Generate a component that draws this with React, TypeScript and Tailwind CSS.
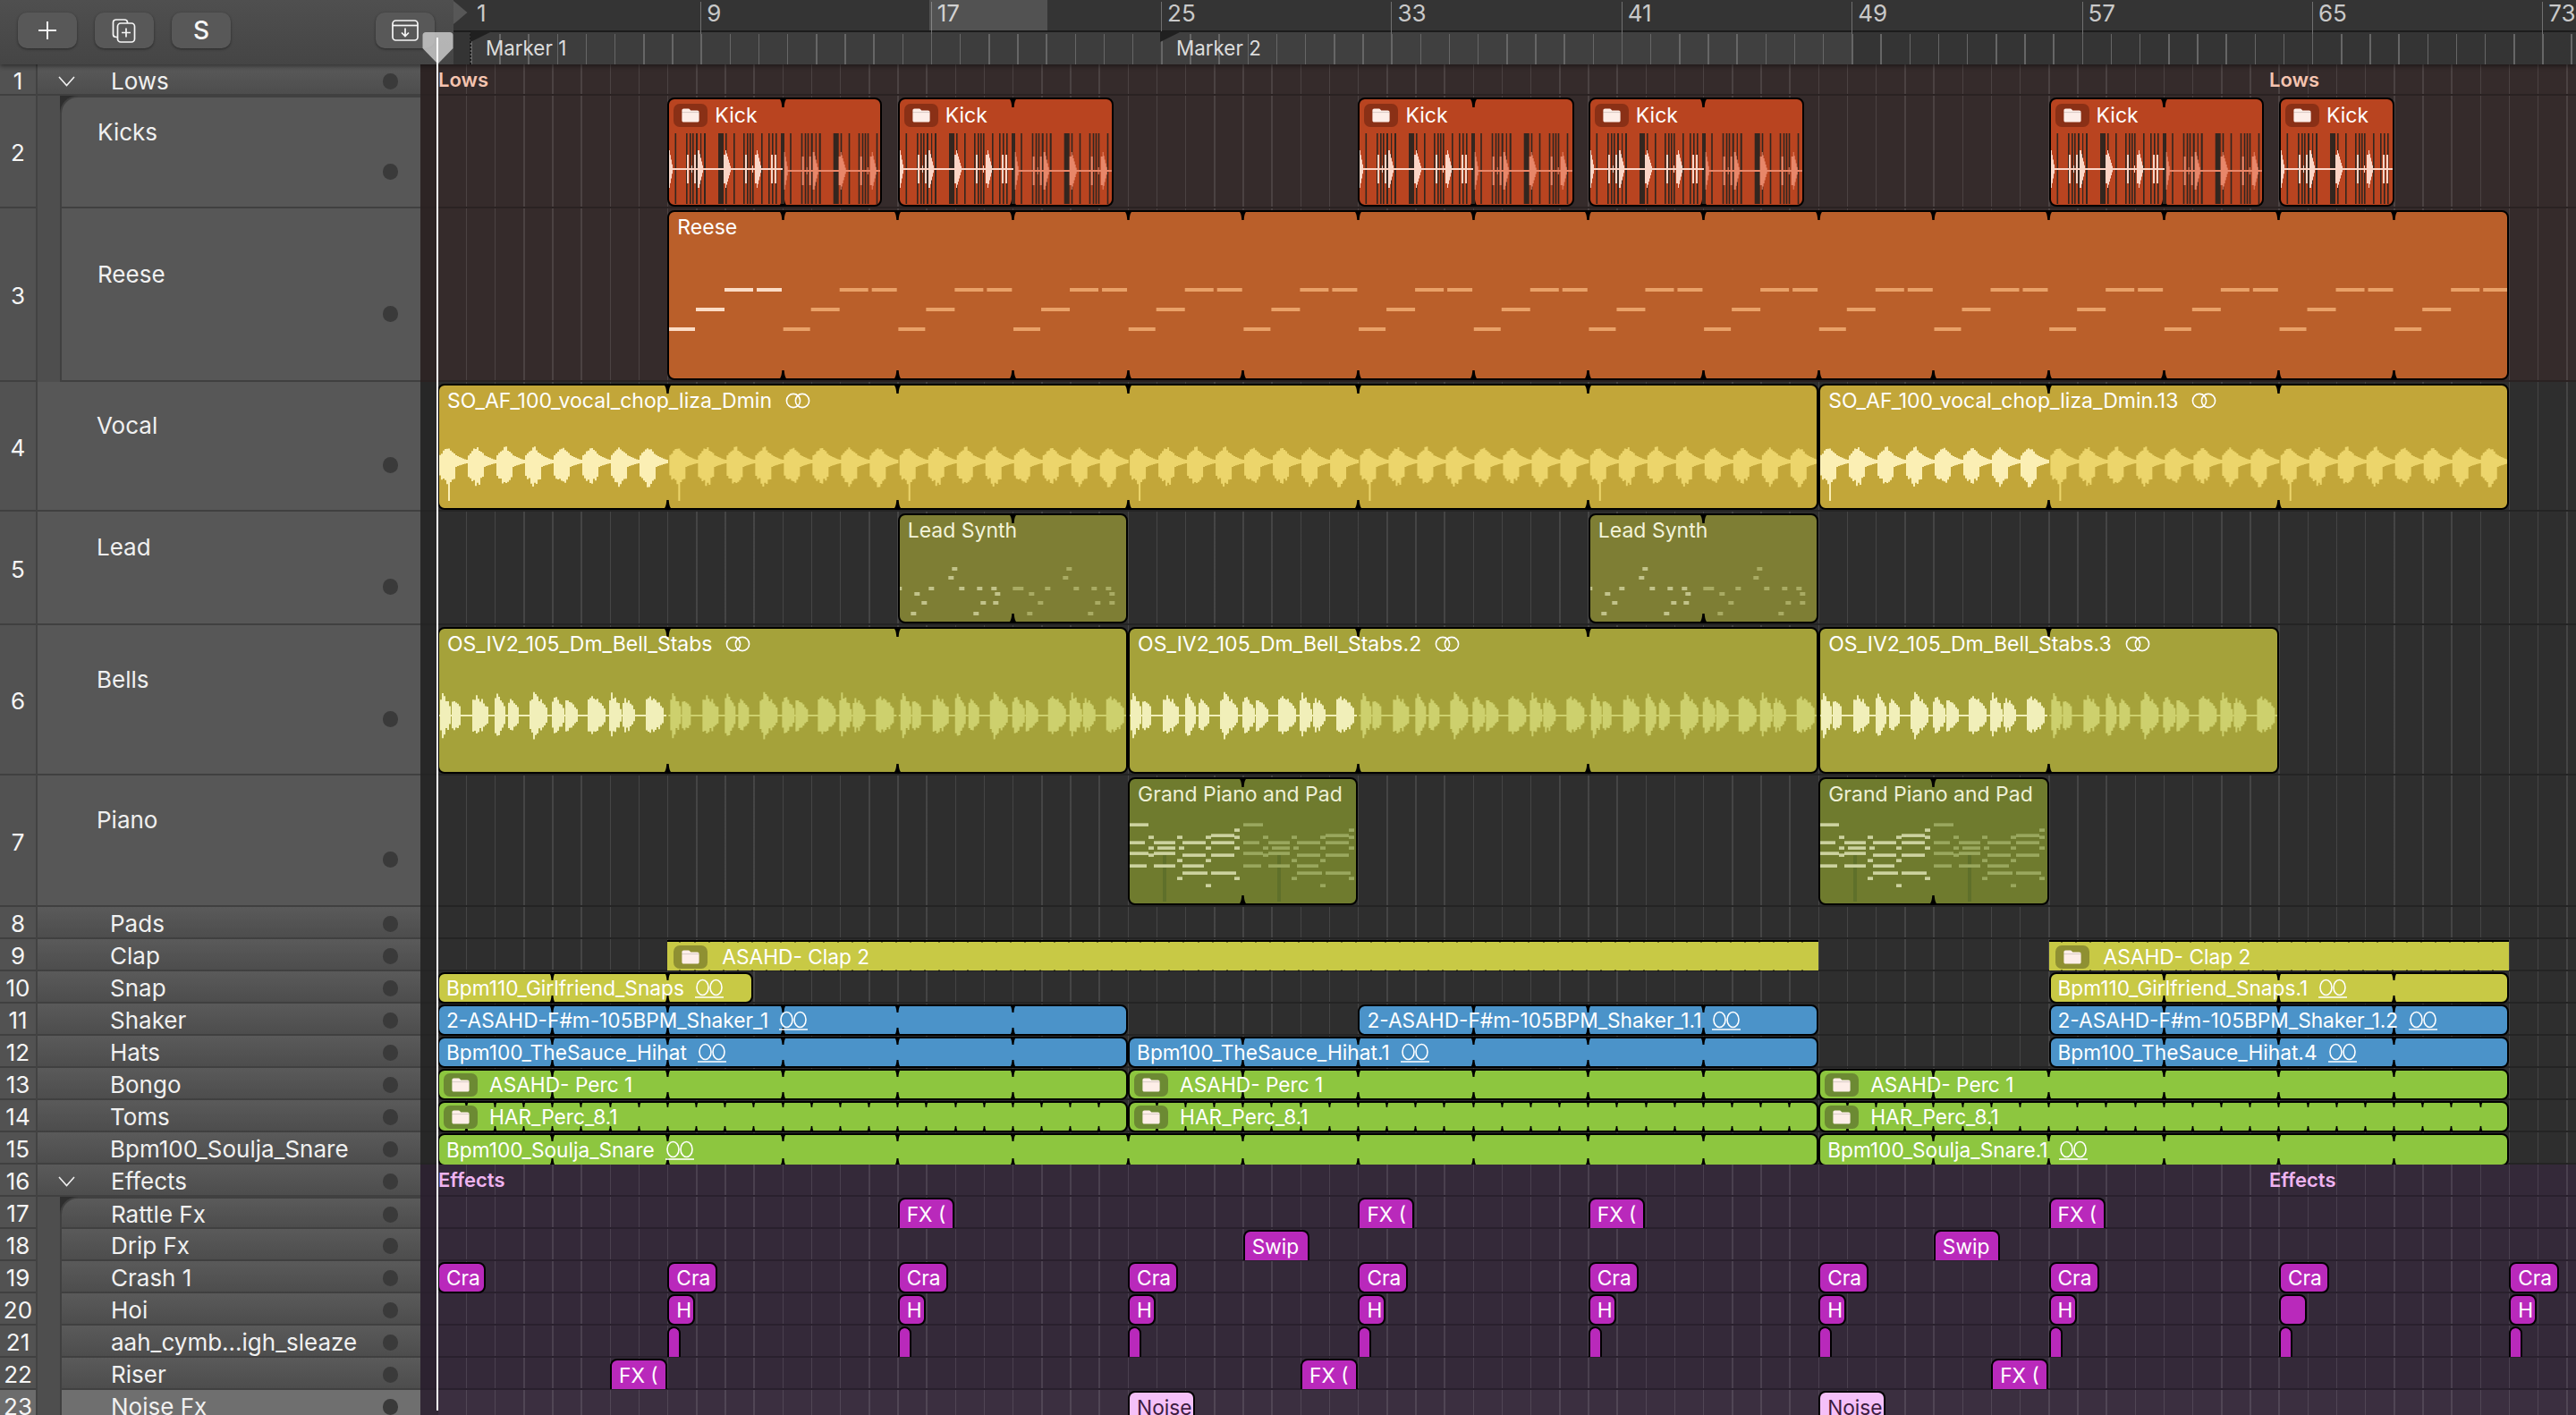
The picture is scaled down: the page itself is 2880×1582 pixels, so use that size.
import React from "react";

const U = 32.17;
const X = (k: number) => 490 + k * U;
const rnd = (i: number) => {
  const s = Math.sin(i * 12.9898 + 4.1) * 43758.5453;
  return s - Math.floor(s);
};

type Art = (w: number) => React.ReactNode;

/* ---------- drawings ---------- */
const bar = (x: number, up: number, dn: number, cy: number, w = 2) =>
  `M${x} ${(cy - up).toFixed(1)}h${w}v${(up + dn).toFixed(1)}h-${w}z`;

const kickBars: [number, number][] = [
  [6.5, 1.6], [19, 1.6], [23, 1.6], [26, 1.6], [30, 2], [35, 1.2], [39, 2], [55, 6], [63, 1.6], [72, 1.6], [83, 1.6],
  [87, 1.6], [90, 1.6], [93, 1.6], [103, 1.6], [111, 1.6], [115, 1.6], [119, 1.6], [125, 4],
];
const kickSpikes: [number, number, number][] = [
  [0, 4, 21], [20, 2, 16], [25, 1, 4], [28, 2, 16], [32, 2, 21], [33, 5, 21], [61, 2, 16], [63, 6, 21], [85, 2, 16],
  [93, 1, 4], [96, 2, 16], [98, 5, 21], [114, 2, 16], [118, 2, 16],
];
const kickArt: Art = (w) => {
  const loops = Math.ceil(w / 128.7);
  return Array.from({ length: loops }).map((_, l) => {
    const ox = l * 128.7 + 2;
    const cy = l === 0 ? 80 : 82;
    let d = `M${ox} ${cy - 1}h127v2h-127z`;
    kickSpikes.forEach(([x, sw, h]) => {
      for (let i = 0; i < sw; i++) {
        const hh = sw <= 2 ? h : h * (1 - i / sw);
        d += bar(ox + x + i, hh, hh, cy, 1);
      }
    });
    return (
      <g key={l}>
        {kickBars.map(([x, bw], i) => (
          <rect key={i} x={ox + x} y={40} width={bw} height={79} fill="#33261f" />
        ))}
        <path d={d} fill={l === 0 ? "#fbd5c6" : "#e8876a"} />
      </g>
    );
  });
};

const reeseArt: Art = (w) => {
  const loops = Math.ceil(w / 128.68);
  return Array.from({ length: loops }).map((_, l) => {
    const ox = l * 128.68 + 1;
    const fill = l === 0 ? "#fbdcc6" : "#e9a168";
    return (
      <g key={l} fill={fill}>
        <rect x={ox} y={131} width={30} height={4} />
        <rect x={ox + 31} y={109} width={32} height={4} />
        <rect x={ox + 63} y={87} width={32} height={4} />
        <rect x={ox + 99} y={87} width={28} height={4} />
      </g>
    );
  });
};

const vocalPath = (ox: number, cy: number) => {
  let d = "";
  for (let x = 0; x < 256; x += 2) {
    const t = x % 32;
    let up = 2;
    let dn = 2;
    if (t < 20) {
      const pk = 1 - Math.abs(t - 9) / 11;
      up = 5 + 12 * pk * (0.75 + 0.35 * rnd(x + 3));
      dn = t < 17 ? 14 + 13 * pk * (0.55 + 0.8 * rnd(x + 50)) : 6;
    } else if (t < 29) {
      const e = 1 - (t - 20) / 9;
      up = 2 + 4 * e;
      dn = 2 + 3 * e;
    }
    d += bar(ox + x, up, dn, cy);
  }
  d += bar(ox + 10, 2, 44, cy);
  return d;
};
const vocalArt: Art = (w) => {
  const loops = Math.ceil(w / 257.4);
  return Array.from({ length: loops }).map((_, l) => (
    <path key={l} d={vocalPath(l * 257.36 + 2, 87)} fill={l === 0 ? "#fbefb4" : "#ecd56b"} />
  ));
};

const bellBumps: [number, number, number][] = [
  [2, 12, 26], [15, 10, 21], [38, 18, 25], [63, 12, 24], [78, 12, 21], [102, 20, 27], [127, 13, 25], [142, 13, 21],
  [167, 20, 25], [191, 13, 26], [206, 13, 21], [232, 20, 24],
];
const bellsPath = (ox: number, cy: number) => {
  let d = `M${ox} ${cy - 1}h255v2h-255z`;
  bellBumps.forEach(([x, bw, h], bi) => {
    for (let i = 0; i < bw; i += 2) {
      const t = i / bw;
      const e = t < 0.15 ? 0.8 : Math.pow(1 - (t - 0.15) / 0.85, 0.45);
      const v = h * e * (0.75 + 0.28 * rnd(bi * 31 + i));
      d += bar(ox + x + i, v, v * (0.85 + 0.2 * rnd(i + bi)), cy);
    }
  });
  return d;
};
const bellsArt: Art = (w) => {
  const loops = Math.ceil(w / 257.4);
  return Array.from({ length: loops }).map((_, l) => (
    <path key={l} d={bellsPath(l * 257.36 + 1, 99)} fill={l === 0 ? "#f1efb9" : "#cdd06d"} />
  ));
};

const leadA: [number, number, number][] = [
  [12, 264, 12], [66, 282, 18], [90, 312, 18], [54, 348, 18], [114, 264, 18], [180, 228, 18], [192, 198, 18],
  [216, 264, 18], [276, 264, 18], [288, 312, 18], [264, 348, 18], [324, 264, 18], [336, 282, 18], [330, 312, 18],
];
const leadB: [number, number, number][] = [
  [396, 264, 36], [450, 282, 18], [480, 312, 18], [444, 348, 18], [504, 264, 18], [564, 228, 18], [576, 198, 18],
  [600, 264, 18], [660, 264, 18], [672, 312, 18], [648, 348, 18], [708, 264, 18], [720, 282, 18], [720, 312, 18],
];
const leadArt: Art = () => (
  <>
    {leadA.map(([x, y, w], i) => (
      <rect key={i} x={x / 3 - 3.7} y={(y - 6) / 3 - 4} width={w / 3} height={4} fill="#c2c38a" />
    ))}
    {leadB.map(([x, y, w], i) => (
      <rect key={i} x={x / 3 - 3.7} y={(y - 6) / 3 - 4} width={w / 3} height={4} fill="#a9ab63" />
    ))}
  </>
);

const pianoA: [number, number, number][] = [
  [36, 186, 66], [102, 228, 18], [36, 246, 54], [36, 282, 66], [36, 324, 60], [102, 264, 18], [102, 288, 18],
  [120, 246, 72], [132, 264, 60], [120, 282, 72], [120, 324, 72], [198, 228, 18], [204, 264, 18], [216, 246, 78],
  [216, 288, 78], [198, 306, 18], [216, 324, 72], [216, 348, 84], [198, 366, 18], [294, 228, 18], [294, 264, 18],
  [294, 306, 18], [294, 390, 18], [312, 222, 78], [312, 246, 78], [312, 288, 78], [312, 348, 84], [390, 204, 18],
  [390, 228, 18], [390, 264, 18], [390, 366, 18],
];
const pianoArt: Art = () => (
  <>
    <rect x={150 / 3 - 11} y={288 / 3 - 9} width={4} height={52} fill="#5f702a" />
    <rect x={534 / 3 - 11} y={288 / 3 - 9} width={4} height={52} fill="#5f702a" />
    {pianoA.map(([x, y, w], i) => (
      <rect key={i} x={x / 3 - 11} y={(y - 5) / 3 - 9} width={w / 3} height={3.6} fill="#cdd3a0" />
    ))}
    {pianoA.map(([x, y, w], i) => (
      <rect key={i} x={(x + 384) / 3 - 11} y={(y - 5) / 3 - 9} width={w / 3} height={3.6} fill="#9aa85e" />
    ))}
  </>
);

/* ---------- small parts ---------- */
const Folder = () => (
  <svg width="20" height="16" viewBox="0 0 20 16">
    <path
      d="M2.5 0.5H7.6C8.4 0.5 8.9 0.8 9.4 1.4L10.2 2.4H17.5C18.9 2.4 19.6 3.1 19.6 4.4V13.4C19.6 14.8 18.9 15.5 17.5 15.5H2.5C1.1 15.5 0.4 14.8 0.4 13.4V2.6C0.4 1.2 1.1 0.5 2.5 0.5Z"
      fill="#fdeee8"
    />
    <path d="M0.4 4.6H19.6" stroke="#00000030" strokeWidth="0.8" />
  </svg>
);

const LoopBig = () => (
  <svg width="30" height="18" viewBox="0 0 30 18" fill="none" stroke="#ffffff" strokeWidth="1.6" className="shrink-0">
    <circle cx="10" cy="9" r="7.6" />
    <circle cx="20" cy="9" r="7.6" />
  </svg>
);
const LoopSmall = () => (
  <svg width="32" height="24" viewBox="0 0 32 24" fill="none" stroke="#ffffff" strokeWidth="1.6" className="shrink-0">
    <ellipse cx="8.5" cy="11" rx="6.5" ry="8.5" />
    <ellipse cx="23.5" cy="11" rx="6.5" ry="8.5" />
    <path d="M0 22H32" />
  </svg>
);

type NotchSize = "big" | "mid" | "tiny" | "dot";
const Notch = ({ x, size, flip }: { x: number; size: NotchSize; flip?: boolean }) => {
  const w = size === "big" ? 13 : size === "mid" ? 11 : size === "tiny" ? 9 : 4;
  const h = size === "big" ? 11 : size === "mid" ? 9 : size === "tiny" ? 7 : 3;
  return (
    <svg
      width={w}
      height={h}
      viewBox="0 0 12 10"
      className={flip ? "absolute bottom-[-2px] rotate-180" : "absolute top-[-2px]"}
      style={{ left: x - w / 2 - 2 }}
    >
      <path d="M0 0H12C8.5 1 7.6 4 7.1 10H4.9C4.4 4 3.5 1 0 0Z" fill="#000" />
    </svg>
  );
};

const Dot = () => <div className="h-[18px] w-[17px] shrink-0 rounded-full bg-[#3a3a3a]" />;

/* ---------- regions ---------- */
type Reg = {
  x: number;
  end: number;
  name?: string;
  color: string;
  fg?: string;
  icon?: boolean;
  pill?: string;
  loop?: "big" | "small";
  step?: number;
  art?: Art;
  flat?: boolean;
  dotted?: boolean;
  tiny?: boolean;
};

const Region = ({ r, tall, last }: { r: Reg; tall: boolean; last?: boolean }) => {
  const w = r.end - r.x;
  const notches: number[] = [];
  if (r.step) for (let i = 1; i * r.step * U < w - 6; i++) notches.push(i * r.step * U);
  const shape = r.dotted
    ? "rounded-none border-x-0 border-b-0 border-t-2 border-black"
    : r.flat
      ? "rounded-t-[8px] border-x-2 border-t-2 border-black"
      : "rounded-[8px] border-2 border-black";
  const place = tall
    ? "top-[2px] bottom-0"
    : last
      ? "top-[1px] bottom-[-4px]"
      : r.flat || r.dotted
        ? "top-[1px] bottom-[-1px]"
        : "top-[1px] bottom-[-2px]";
  const size: NotchSize = r.dotted ? "dot" : r.tiny ? "tiny" : tall ? "big" : "mid";
  return (
    <div className={`absolute ${place} ${shape} ${r.color}`} style={{ left: r.x - 471, width: w }}>
      {notches.map((n) => (
        <React.Fragment key={n}>
          <Notch x={n} size={size} />
          <Notch x={n} size={size} flip />
        </React.Fragment>
      ))}
      <div className={`absolute inset-0 overflow-hidden ${r.dotted ? "" : r.flat ? "rounded-t-[6px]" : "rounded-[6px]"}`}>
        {r.art && (
          <svg className="absolute -left-[2px] -top-[2px] h-[300px] overflow-visible" width={w}>
            {r.art(w)}
          </svg>
        )}
        {tall ? (
          <div className={`relative flex items-center whitespace-nowrap text-[23px] ${r.fg ?? "text-white"} ${r.icon ? "pl-[5px] pt-[5px] leading-[26px]" : "pl-[9px] pt-[2px] leading-[30px]"}`}>
            {r.icon && (
              <span className={`mr-[8px] flex h-[26px] w-[38px] shrink-0 items-center justify-center rounded-[7px] ${r.pill}`}>
                <Folder />
              </span>
            )}
            <span>{r.name}</span>
            {r.loop === "big" && <span className="ml-[14px] flex"><LoopBig /></span>}
          </div>
        ) : (
          <div className={`relative flex h-full items-center whitespace-nowrap pt-[1px] text-[22.7px] leading-[30px] ${r.fg ?? "text-white"} ${r.dotted ? "pl-[7px]" : r.icon ? "pl-[5px]" : "pl-[8px]"}`}>
            {r.icon && (
              <span className={`${r.dotted ? "mr-[16px]" : "mr-[13px]"} flex h-[26px] w-[38px] shrink-0 items-center justify-center rounded-[7px] ${r.pill}`}>
                <Folder />
              </span>
            )}
            <span>{r.name}</span>
            {r.loop === "small" && <span className="ml-[12px] flex"><LoopSmall /></span>}
          </div>
        )}
      </div>
    </div>
  );
};

/* ---------- data ---------- */
const KICK = "bg-[#b94420]";
const REESE = "bg-[#ba5f2a]";
const VOCAL = "bg-[#c2a639]";
const LEAD = "bg-[#7e7e34]";
const BELL = "bg-[#a5a23a]";
const PIANO = "bg-[#6f7b2e]";
const CLAP = "bg-[#c8c945]";
const BLUE = "bg-[#4b93c9]";
const GREEN = "bg-[#8dc63f]";
const FX = "bg-[#b929bb]";
const NOISE = "bg-[#f5c0f8]";

const kick = (a: number, end: number, step?: number): Reg => ({
  x: a, end, name: "Kick", color: KICK, icon: true, pill: "bg-[#8a3016]", step, art: kickArt,
});
const vocal = (a: number, b: number, name: string): Reg => ({
  x: X(a), end: X(b), name, color: VOCAL, loop: "big", step: 8, art: vocalArt,
});
const bell = (a: number, b: number, name: string): Reg => ({
  x: X(a), end: X(b), name, color: BELL, loop: "big", step: 8, art: bellsArt,
});
const lead = (a: number): Reg => ({
  x: X(a), end: X(a + 8), name: "Lead Synth", color: LEAD, fg: "text-[#f3f3da]", step: 4, art: leadArt,
});
const piano = (a: number): Reg => ({
  x: X(a), end: X(a + 8), name: "Grand Piano and Pad", color: PIANO, fg: "text-[#eef0d6]", step: 4, art: pianoArt,
});
const small = (a: number, end: number, name: string, color: string, step = 4): Reg => ({
  x: X(a), end, name, color, loop: "small", step,
});
const folder = (a: number, b: number, name: string, color: string, pill: string, step: number, extra?: Partial<Reg>): Reg => ({
  x: X(a), end: X(b), name, color, icon: true, pill, step, ...extra,
});
const clip = (a: number, w: number, name: string, flat: boolean): Reg => ({ x: X(a), end: X(a) + w, name, color: FX, flat });

type Row = { n: number; name: string; h: number; bg: string; regs: Reg[]; indent?: boolean; first?: boolean; group?: boolean; sel?: boolean; tall?: boolean; label?: string; labelColor?: string };
const LOW = "bg-[#352b2b]";
const MID = "bg-[#2e2e2e]";
const EFF = "bg-[#342939]";

const rows: Row[] = [
  { n: 1, name: "Lows", h: 35, bg: LOW, regs: [], group: true, label: "Lows", labelColor: "text-[#f5c4b0]" },
  {
    n: 2, name: "Kicks", h: 126, bg: LOW, indent: true, first: true, tall: true,
    regs: [kick(X(8), 987, 4), kick(X(16), 1246, 4), kick(X(32), 1761, 4), kick(X(40), 2018, 4), kick(X(56), 2532, 4), kick(X(64), 2678)],
  },
  {
    n: 3, name: "Reese", h: 194, bg: LOW, indent: true, tall: true,
    regs: [{ x: X(8), end: X(72), name: "Reese", color: REESE, step: 4, art: reeseArt }],
  },
  {
    n: 4, name: "Vocal", h: 145, bg: MID, tall: true,
    regs: [vocal(0, 48, "SO_AF_100_vocal_chop_liza_Dmin"), vocal(48, 72, "SO_AF_100_vocal_chop_liza_Dmin.13")],
  },
  { n: 5, name: "Lead", h: 127, bg: MID, tall: true, regs: [lead(16), lead(40)] },
  {
    n: 6, name: "Bells", h: 168, bg: MID, tall: true,
    regs: [bell(0, 24, "OS_IV2_105_Dm_Bell_Stabs"), bell(24, 48, "OS_IV2_105_Dm_Bell_Stabs.2"), bell(48, 64, "OS_IV2_105_Dm_Bell_Stabs.3")],
  },
  { n: 7, name: "Piano", h: 147, bg: MID, tall: true, regs: [piano(24), piano(48)] },
  { n: 8, name: "Pads", h: 36, bg: MID, regs: [] },
  {
    n: 9, name: "Clap", h: 36, bg: MID,
    regs: [
      folder(8, 48, "ASAHD- Clap 2", CLAP, "bg-[#8f9032]", 0.5, { dotted: true }),
      folder(56, 72, "ASAHD- Clap 2", CLAP, "bg-[#8f9032]", 0.5, { dotted: true }),
    ],
  },
  {
    n: 10, name: "Snap", h: 36, bg: MID,
    regs: [small(0, 843, "Bpm110_Girlfriend_Snaps", CLAP), small(56, X(72), "Bpm110_Girlfriend_Snaps.1", CLAP)],
  },
  {
    n: 11, name: "Shaker", h: 36, bg: MID,
    regs: [
      small(0, X(24), "2-ASAHD-F#m-105BPM_Shaker_1", BLUE),
      small(32, X(48), "2-ASAHD-F#m-105BPM_Shaker_1.1", BLUE),
      small(56, X(72), "2-ASAHD-F#m-105BPM_Shaker_1.2", BLUE),
    ],
  },
  {
    n: 12, name: "Hats", h: 36, bg: MID,
    regs: [
      small(0, X(24), "Bpm100_TheSauce_Hihat", BLUE),
      small(24, X(48), "Bpm100_TheSauce_Hihat.1", BLUE),
      small(56, X(72), "Bpm100_TheSauce_Hihat.4", BLUE),
    ],
  },
  {
    n: 13, name: "Bongo", h: 36, bg: MID,
    regs: [0, 24, 48].map((a) => folder(a, a + 24, "ASAHD- Perc 1", GREEN, "bg-[#6c8a33]", 4)),
  },
  {
    n: 14, name: "Toms", h: 36, bg: MID,
    regs: [0, 24, 48].map((a) => folder(a, a + 24, "HAR_Perc_8.1", GREEN, "bg-[#6c8a33]", 1, { tiny: true })),
  },
  {
    n: 15, name: "Bpm100_Soulja_Snare", h: 36, bg: MID,
    regs: [small(0, X(48), "Bpm100_Soulja_Snare", GREEN), small(48, X(72), "Bpm100_Soulja_Snare.1", GREEN)],
  },
  { n: 16, name: "Effects", h: 36, bg: EFF, regs: [], group: true, label: "Effects", labelColor: "text-[#eeb3f0]" },
  { n: 17, name: "Rattle Fx", h: 36, bg: EFF, indent: true, first: true, regs: [16, 32, 40, 56].map((k) => clip(k, 63, "FX (", true)) },
  { n: 18, name: "Drip Fx", h: 36, bg: EFF, indent: true, regs: [28, 52].map((k) => clip(k, 74, "Swip", true)) },
  {
    n: 19, name: "Crash 1", h: 36, bg: EFF, indent: true,
    regs: [0, 8, 16, 24, 32, 40, 48, 56, 64, 72].map((k) => clip(k, k === 0 ? 54 : 56, "Cra", false)),
  },
  {
    n: 20, name: "Hoi", h: 36, bg: EFF, indent: true,
    regs: [8, 16, 24, 32, 40, 48, 56, 64, 72].map((k) => clip(k, 31, k === 64 ? "" : "H", false)),
  },
  { n: 21, name: "aah_cymb...igh_sleaze", h: 36, bg: EFF, indent: true, regs: [8, 16, 24, 32, 40, 48, 56, 64, 72].map((k) => clip(k, 15, "", true)) },
  { n: 22, name: "Riser", h: 36, bg: EFF, indent: true, regs: [6, 30, 54].map((k) => clip(k, 64, "FX (", true)) },
  {
    n: 23, name: "Noise Fx", h: 36, bg: "bg-[#3b2f40]", indent: true, sel: true,
    regs: [24, 48].map((k) => ({ x: X(k), end: X(k) + 75, name: "Noise", color: NOISE, fg: "text-[#3d1c40]", flat: true })),
  },
];

const H = ({ children }: { children: React.ReactNode }) => (
  <div className="flex h-[40px] w-[66px] items-center justify-center rounded-[10px] bg-[#585858] text-[white] shadow-[0_1px_3px_rgba(0,0,0,0.45)]">
    {children}
  </div>
);

const Chevron = () => (
  <svg width="19" height="12" viewBox="0 0 19 12" fill="none" stroke="#f0f0f0" strokeWidth="1.6" className="shrink-0">
    <path d="M1 1L9.5 10.5L18 1" />
  </svg>
);

const bars = [1, 9, 17, 25, 33, 41, 49, 57, 65, 73];

export default function App() {
  const marks = Array.from({ length: 74 }).map((_, i) => i);
  return (
    <div className="relative flex h-[1582px] w-[2880px] flex-col overflow-hidden bg-[#2e2e2e] font-[family-name:Inter,sans-serif] text-[#f0f0f0]">
      {/* header */}
      <div className="relative z-10 flex h-[72px] shrink-0 shadow-[0_2px_5px_rgba(0,0,0,0.45)]">
        <div className="flex w-[507px] items-center gap-[20px] bg-gradient-to-b from-[#4f4f4f] to-[#454545] pb-[4px] pl-[20px] pr-[21px]">
          <H>
            <svg width="22" height="24" viewBox="0 0 22 24" stroke="#f5f5f5" strokeWidth="2" fill="none">
              <path d="M11 2V22M1 12H21" />
            </svg>
          </H>
          <H>
            <svg width="28" height="27" viewBox="0 0 28 27" stroke="#f5f5f5" strokeWidth="1.7" fill="none">
              <path d="M6 20.5H5C3 20.5 1.5 19.5 1.5 17.5V4C1.5 2 3 1 5 1H14C16 1 17.5 2 17.5 4V5" />
              <rect x="6.5" y="5" width="19" height="21" rx="3.5" />
              <path d="M16 10.5V20.5M11 15.5H21" />
            </svg>
          </H>
          <H>
            <span className="text-[28px] font-medium leading-none text-[#f5f5f5]">S</span>
          </H>
          <div className="ml-auto">
            <H>
              <svg width="30" height="24" viewBox="0 0 30 24" stroke="#f5f5f5" strokeWidth="1.7" fill="none">
                <rect x="1" y="1" width="28" height="22" rx="3.5" />
                <path d="M1 6.5H29" />
                <path d="M15 9.5V18.5M11 14.5L15 18.5L19 14.5" />
              </svg>
            </H>
          </div>
        </div>
        <div className="relative flex flex-1 flex-col bg-[#383838]">
          <svg width="16" height="26" viewBox="0 0 16 26" className="absolute left-0 top-[1px]">
            <path d="M0 0L15.5 13L0 26Z" fill="#575757" />
          </svg>
          <div className="h-[34px] shrink-0 bg-[#343434]" />
          <div className="h-[2px] shrink-0 bg-[#1c1c1c]" />
          <div className="relative flex-1 bg-[#343434]">
            <div className="absolute bottom-0 left-[19px] top-0 w-[771px] bg-[#3d3d3d]" />
            <div className="absolute bottom-0 left-[790px] top-0 w-[773px] bg-[#404040]" />
          </div>
          {bars.map((b, i) => {
            const x = 19 + i * 8 * U;
            return (
              <React.Fragment key={b}>
                {i > 0 && <div className="absolute bottom-0 top-[2px] w-[1px] bg-[#707070]" style={{ left: x }} />}
                <span className="absolute top-[1px] text-[26px] leading-[27px] text-[#c9c9c9]" style={{ left: x + 7 }}>
                  {b}
                </span>
              </React.Fragment>
            );
          })}
          {marks.map((m) => (
            <div key={m} className="absolute bottom-0 top-[38px] w-[1.5px] bg-[#666666]" style={{ left: 19 + m * U }} />
          ))}
          <div className="absolute bottom-0 left-[18px] top-[34px] w-[2px] border-l-2 border-dotted border-[#1a1a1a]" />
          <svg width="24" height="14" viewBox="0 0 24 14" className="absolute left-[19px] top-[35px]">
            <path d="M0 0H24L0 12Z" fill="#202020" />
          </svg>
          <svg width="24" height="14" viewBox="0 0 24 14" className="absolute left-[790px] top-[35px]">
            <path d="M0 0H24L0 12Z" fill="#202020" />
          </svg>
          <span className="absolute left-[36px] top-[40px] text-[22.4px] leading-[28px] text-[#dcdcdc]">Marker 1</span>
          <span className="absolute left-[808px] top-[40px] text-[22.4px] leading-[28px] text-[#dcdcdc]">Marker 2</span>
        </div>
      </div>

      {/* ruler highlight for bar 17 */}
      <div className="absolute left-[1039px] top-0 z-10 h-[34px] w-[132px] bg-white/15" />

      {/* body */}
      <div className="flex flex-1 overflow-hidden">
        <div className="w-[470px] shrink-0">
          {rows.map((r) => (
            <div key={r.n} className="flex" style={{ height: r.h }}>
              <div
                className={`flex w-[40px] shrink-0 items-center justify-center border-b-2 border-[#404040] pt-[4px] text-[26px] leading-none text-[#f5f5f5] ${r.sel ? "bg-[#6c6c6c]" : "bg-[#525252]"}`}
              >
                {r.n}
              </div>
              <div className="w-[2px] shrink-0 bg-[#424242]" />
              {r.indent && <div className="flex w-[25px] shrink-0 bg-[#4e4e4e]" />}
              <div
                className={`flex min-w-0 flex-1 items-center border-b-2 border-[#404040] ${r.first ? "rounded-tl-[20px] border-t-2" : ""} ${r.sel ? "bg-[#6f6f6f]" : r.tall ? "bg-[#575757]" : "bg-gradient-to-b from-[#5a5a5a] to-[#4d4d4d]"} ${r.indent ? "border-l-2 border-l-[#404040]" : ""}`}
              >
                {r.tall ? (
                  <div className={`flex w-full flex-col gap-[20px] pb-[7px] pr-[25px] ${r.indent ? "pl-[40px]" : "pl-[66px]"}`}>
                    <div className="text-[26px] leading-[30px]">{r.name}</div>
                    <div className="flex justify-end">
                      <Dot />
                    </div>
                  </div>
                ) : (
                  <div className={`flex w-full items-center pr-[25px] pt-[4px] ${r.group ? "pl-[23px]" : r.indent ? "pl-[55px]" : "pl-[81px]"}`}>
                    {r.group && (
                      <span className="mr-[40px] flex">
                        <Chevron />
                      </span>
                    )}
                    <span className="whitespace-nowrap text-[26px] leading-[30px]">{r.name}</span>
                    <span className="ml-auto flex">
                      <Dot />
                    </span>
                  </div>
                )}
              </div>
            </div>
          ))}
        </div>
        <div className="min-w-0 flex-1">
          {rows.map((r) => (
            <div key={r.n} className={`relative border-b-2 border-black/20 ${r.bg}`} style={{ height: r.h }}>
              <div className="absolute inset-y-0 left-0 w-[20px] bg-black/15" />
              <div className="absolute inset-y-0 left-[20px] right-0 bg-[repeating-linear-gradient(90deg,transparent_0,transparent_30.67px,rgba(255,255,255,0.11)_30.67px,rgba(255,255,255,0.11)_32.17px)]" />
              {r.label && (
                <>
                  <span className={`absolute left-[20px] top-1/2 -translate-y-1/2 text-[22px] font-semibold leading-none ${r.labelColor}`}>{r.label}</span>
                  <span className={`absolute left-[2067px] top-1/2 -translate-y-1/2 text-[22px] font-semibold leading-none ${r.labelColor}`}>{r.label}</span>
                </>
              )}
              {r.regs.map((reg, i) => (
                <Region key={i} r={reg} tall={!!r.tall} last={r.n === 15} />
              ))}
            </div>
          ))}
        </div>
      </div>

      {/* playhead */}
      <svg width="35" height="36" viewBox="0 0 35 36" className="absolute left-[472px] top-[36px] z-20">
        <path d="M4 0H31C33 0 34.5 1.5 34.5 3.5V18L17.5 35.5L0.5 18V3.5C0.5 1.5 2 0 4 0Z" fill="#c8c8c8" fillOpacity="0.85" />
      </svg>
      <div className="absolute bottom-[5px] left-[488px] top-[42px] z-20 w-[2px] bg-white" />
    </div>
  );
}
